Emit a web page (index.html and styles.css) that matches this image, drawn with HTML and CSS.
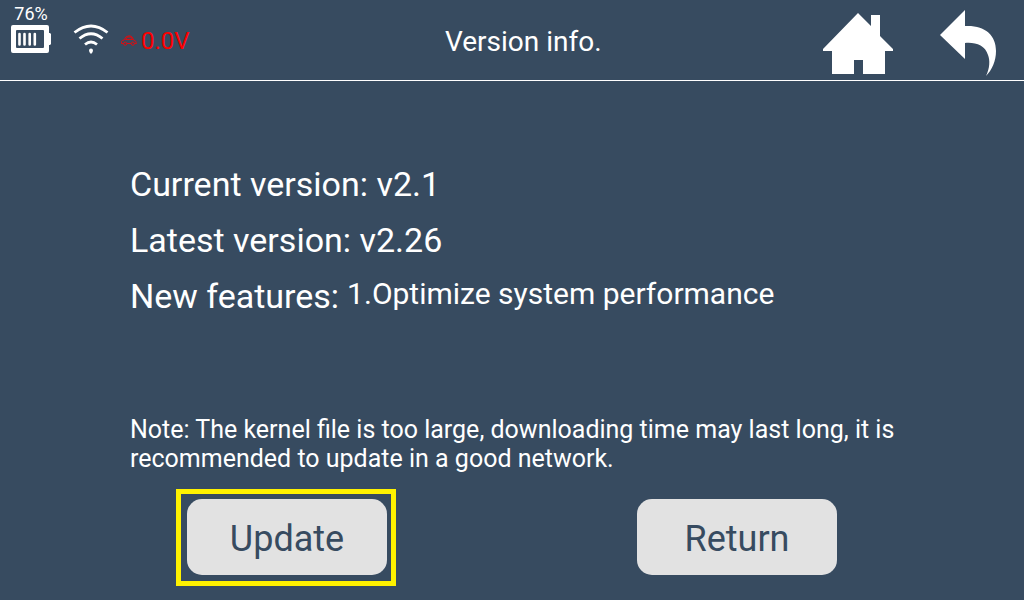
FILE: index.html
```html
<!DOCTYPE html>
<html lang="en">
<head>
  <meta charset="UTF-8" />
  <meta name="viewport" content="width=device-width, initial-scale=1" />
  <title>Version info.</title>
  <link rel="stylesheet" href="styles.css">
</head>
<body>
  <header class="topbar">
    <div class="status">
      <div class="battery">
        <span>76%</span>
        <svg width="40" height="28" viewBox="0 0 40 28">
          <path fill="#fff" fill-rule="evenodd" d="M2 0H36Q38 0 38 2V8H39L40 9V19L39 20H38V26Q38 28 36 28H2Q0 28 0 26V2Q0 0 2 0ZM6 5Q5 5 5 6V22Q5 23 6 23H32Q33 23 33 22V6Q33 5 32 5Z" />
          <path stroke="#fff" stroke-width="2.600" stroke-linecap="round" d="M8.500 9V19.500M13.500 9V19.500M18.700 9V19.500M23.800 9V19.500" />
        </svg>
      </div>
      <svg class="wifi" width="36" height="30" viewBox="0 0 36 30">
        <g fill="none" stroke="#fff" stroke-width="2.800">
          <path d="M1.500 8.500Q18 -4.500 34.500 8.500" />
          <path d="M6.500 14.500Q18 5 29.500 14.500" />
          <path d="M12 20.500Q18 15.500 24 20.500" />
        </g>
        <path fill="#fff" d="M18 24.500Q20 24.500 20 26.500Q20 28 18 30Q16 28 16 26.500Q16 24.500 18 24.500Z" />
      </svg>
      <svg class="car" width="16" height="11" viewBox="0 0 16 11">
        <g fill="none" stroke="#f00" stroke-width=".8">
          <path d="M2.500 8.500H.5V6.500Q.8 5.200 3 5Q4.500 .8 8 .8Q11.500 .8 12.500 5Q15.300 5.200 15.500 8.500H13.500M6 8.500H10M4.500 4.500H11.500L10 2H6.500Z" />
          <circle cx="4.200" cy="8.700" r="1.600" />
          <circle cx="11.800" cy="8.700" r="1.600" />
        </g>
      </svg>
      <span class="voltage">0.0V</span>
    </div>
    <h1>Version info.</h1>
    <nav class="nav">
      <button class="icon-btn" aria-label="Home">
        <svg width="70" height="62" viewBox="0 0 70 62">
          <path fill="#fff" d="M35 0L48 13V2H57V23L70 36V38H62V61H40V47H31V61H9V38H0V36Z" />
        </svg>
      </button>
      <button class="icon-btn" aria-label="Back">
        <svg width="57" height="66" viewBox="0 0 57 66">
          <path fill="#fff" d="M0 25L25 0V16C45 15 56 25 56 41C56 51 52 60 46 66C50 58 50 50 48 45C45 35 35 32 25 33V49Z" />
        </svg>
      </button>
    </nav>
  </header>

  <main>
    <section class="info">
      <p>Current version: v2.1</p>
      <p>Latest version: v2.26</p>
      <div class="features">
        <p>New features:</p>
        <p class="feature-list">1.Optimize system performance</p>
      </div>
    </section>

    <p class="note">Note: The kernel file is too large, downloading time may last long, it is recommended to update in a good network.</p>

    <div class="actions">
      <button class="btn selected">Update</button>
      <button class="btn">Return</button>
    </div>
  </main>
</body>
</html>
```
FILE: styles.css
```css
* {
  box-sizing: border-box;
}

body {
  margin: 0;
  min-height: 100vh;
  display: flex;
  flex-direction: column;
  background-color: #374b60;
  color: #fff;
  font-family: Roboto, "Liberation Sans", sans-serif;
}

h1, p {
  margin: 0;
  font-weight: normal;
}

svg {
  display: block;
}

button {
  border: none;
  cursor: pointer;
  font-family: inherit;
}

/* Top bar */
.topbar {
  display: grid;
  grid-template-columns: auto 1fr auto;
  padding: 0 27px 0 11px;
  border-bottom: 1px solid #fff;
}

.topbar h1 {
  padding: 4px 0 0 34px;
  font-size: 28px;
  line-height: 76px;
  text-align: center;
}

.status {
  display: flex;
  height: 80px;
}

.battery {
  display: flex;
  flex-direction: column;
  align-items: center;
  padding-top: 3px;
  font-size: 18px;
  line-height: 22px;
}

.wifi {
  margin: 24px 0 0 22px;
}

.car {
  margin: 35px 0 0 12px;
}

.voltage {
  margin-left: 4px;
  color: #f00;
  font-size: 24px;
  line-height: 82px;
}

.nav {
  display: flex;
  gap: 47px;
  padding-top: 10px;
  align-items: flex-start;
}

.icon-btn {
  padding: 0;
  background: none;
}

.icon-btn:first-child {
  padding-top: 3px;
}

/* Content */
main {
  flex: 1;
  display: flex;
  flex-direction: column;
  padding: 75px 0 25px;
}

.info {
  padding: 0 130px;
  font-size: 34px;
  line-height: 56px;
}

.features {
  display: flex;
  gap: 8px;
}

.feature-list {
  font-size: 30px;
  line-height: 52px;
}

.note {
  margin-top: auto;
  padding: 0 120px 0 130px;
  font-size: 25px;
  line-height: 29px;
}

.actions {
  display: flex;
  justify-content: space-between;
  margin-top: 26px;
  padding: 0 187px;
}

.btn {
  width: 200px;
  height: 76px;
  padding: 4px 0 0;
  border-radius: 15px;
  background-color: #e2e2e2;
  color: #374b60;
  font-size: 36px;
}

.selected {
  position: relative;
}

/* square frame round the selected button */
.selected::after {
  content: "";
  position: absolute;
  inset: -10px -9px -11px -11px;
  border: 5px solid #fff200;
}
```
